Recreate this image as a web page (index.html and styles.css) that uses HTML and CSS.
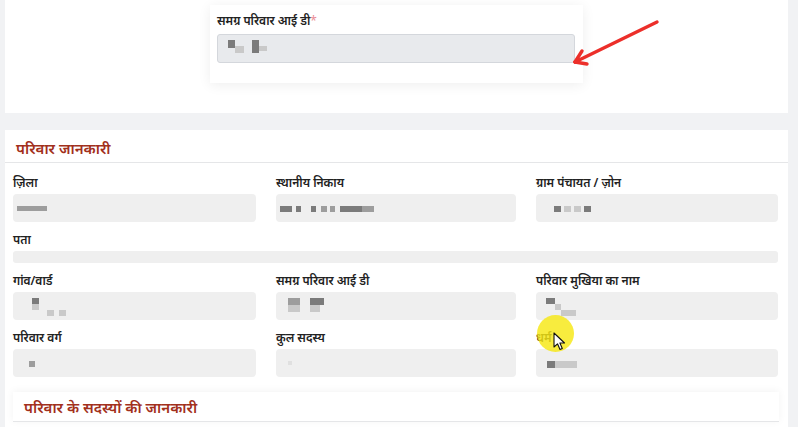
FILE: index.html
```html
<!DOCTYPE html>
<html lang="hi">
<head>
<meta charset="utf-8">
<title>परिवार जानकारी</title>
<link rel="stylesheet" href="styles.css">
</head>
<body>
<div class="page">
  <section class="top-panel">
    <div class="id-card">
      <label class="label">समग्र परिवार आई डी<span class="req">*</span></label>
      <div class="id-input">
        <span class="blk d w7 h8"></span><span class="blk l w9 h7 low"></span>
        <span class="blk d w7 h13 sp8"></span><span class="blk l w8 h5 low"></span>
      </div>
    </div>
  </section>

  <section class="info-panel">
    <h2 class="panel-title">परिवार जानकारी</h2>
    <div class="grid">
      <div class="field">
        <div class="label">ज़िला</div>
        <div class="input"><span class="blk m w30 h5"></span></div>
      </div>
      <div class="field">
        <div class="label">स्थानीय निकाय</div>
        <div class="input">
          <span class="blk d w12 h6"></span><span class="blk d w5 h6 sp4"></span><span class="blk d w5 h6 sp10"></span><span class="blk m w6 h6 sp5"></span><span class="blk m w5 h6 sp3"></span><span class="blk d w22 h6 sp5"></span><span class="blk m w12 h6"></span>
        </div>
      </div>
      <div class="field">
        <div class="label">ग्राम पंचायत / ज़ोन</div>
        <div class="input"><span class="blk d w7 h6 sp14"></span><span class="blk l w7 h6 sp3"></span><span class="blk l w7 h6 sp3"></span><span class="blk d w7 h6 sp3"></span></div>
      </div>

      <div class="field wide">
        <div class="label">पता</div>
        <div class="input thin"></div>
      </div>

      <div class="field">
        <div class="label">गांव/वार्ड</div>
        <div class="input">
          <span class="stack sp15"><span class="blk d w7 h6"></span><span class="blk l w7 h6"></span></span>
          <span class="blk l w7 h6 low sp8"></span><span class="blk l w7 h6 low sp5"></span>
        </div>
      </div>
      <div class="field">
        <div class="label">समग्र परिवार आई डी</div>
        <div class="input">
          <span class="stack sp8"><span class="blk m w12 h7"></span><span class="blk l w12 h7"></span></span>
          <span class="stack sp10"><span class="blk d w14 h7"></span><span class="blk l w10 h7"></span></span>
        </div>
      </div>
      <div class="field">
        <div class="label">परिवार मुखिया का नाम</div>
        <div class="input">
          <span class="stack sp6"><span class="blk d w9 h6"></span></span><span class="blk l w6 h6 hi"></span>
          <span class="blk l w15 h6 low"></span>
        </div>
      </div>

      <div class="field">
        <div class="label">परिवार वर्ग</div>
        <div class="input"><span class="blk m w6 h6 sp12"></span></div>
      </div>
      <div class="field">
        <div class="label">कुल सदस्य</div>
        <div class="input"><span class="blk f w4 h4 sp8"></span></div>
      </div>
      <div class="field">
        <div class="label">धर्म</div>
        <div class="input"><span class="blk d w8 h7 sp7"></span><span class="blk l w22 h7"></span></div>
      </div>
    </div>

    <div class="sub-card">
      <h3 class="sub-title">परिवार के सदस्यों की जानकारी</h3>
    </div>
  </section>
</div>

<svg class="arrow" width="110" height="60" viewBox="0 0 110 60" aria-hidden="true">
  <g fill="none" stroke="#ec2f2a" stroke-width="3.4" stroke-linecap="round" stroke-linejoin="round">
    <path d="M96 6 L14 46"/>
    <path d="M14 46 L21 35"/>
    <path d="M14 46 L26 48"/>
  </g>
</svg>

<div class="highlight"></div>
<svg class="cursor" width="14" height="20" viewBox="0 0 14 20" aria-hidden="true">
  <path d="M1 1 L1 15 L4.5 11.8 L7 17.5 L9.3 16.5 L6.9 11 L11.5 11 Z" fill="#fff" stroke="#111" stroke-width="1.1" stroke-linejoin="round"/>
</svg>
</body>
</html>
```

FILE: styles.css
```css
* { box-sizing: border-box; }

html, body {
  margin: 0;
  padding: 0;
}

body {
  background: #f1f2f4;
  font-family: "Noto Sans", "Lohit Devanagari", "FreeSans", sans-serif;
  color: #222;
  width: 798px;
  height: 427px;
  overflow: hidden;
  position: relative;
}

.page {
  padding: 0 10px 0 5px;
}

.top-panel {
  background: #fff;
  height: 113px;
  display: flex;
  justify-content: center;
  padding-top: 5px;
}

.id-card {
  width: 373px;
  height: 78px;
  background: #fff;
  box-shadow: 0 2px 12px rgba(0, 0, 0, 0.07);
  padding: 8px 8px 0 7px;
}

.label {
  display: block;
  font-size: 12px;
  font-weight: 600;
  line-height: 16px;
  height: 16px;
  color: #222;
  margin-bottom: 3px;
  white-space: nowrap;
}

.req {
  color: #eb8e96;
  font-weight: 400;
}

.id-input {
  height: 29px;
  margin-top: 5px;
  background: #e8eaed;
  border: 1px solid #d4d7dc;
  border-radius: 3px;
  display: flex;
  align-items: flex-start;
  padding: 5px 0 0 10px;
}

.info-panel {
  background: #fff;
  margin-top: 17px;
  height: 297px;
}

.panel-title {
  margin: 0;
  height: 33px;
  line-height: 36px;
  padding-left: 11px;
  font-size: 15px;
  font-weight: 600;
  color: #a2301c;
  border-bottom: 1px solid #e5e6e8;
}

.grid {
  display: grid;
  grid-template-columns: 243px 240px 242px;
  column-gap: 20px;
  row-gap: 10px;
  padding: 12px 9px 0 8px;
}

.field.wide {
  grid-column: 1 / -1;
}

.input {
  height: 28px;
  background: #efefef;
  border-radius: 4px;
  display: flex;
  align-items: flex-start;
  padding: 12px 0 0 4px;
}

.input.thin {
  height: 12px;
  padding: 0;
  border-radius: 3px;
}

.blk {
  display: block;
  flex: none;
}
.blk.d { background: #7b7b7b; }
.blk.m { background: #9d9d9d; }
.blk.l { background: #c9c9c9; }
.blk.f { background: #e0e0e0; }
.blk.low { margin-top: 6px; }
.blk.hi { margin-top: 0; }

.stack {
  display: flex;
  flex-direction: column;
  flex: none;
  margin-top: -6px;
}

.w4 { width: 4px; } .w5 { width: 5px; } .w6 { width: 6px; } .w7 { width: 7px; }
.w8 { width: 8px; } .w9 { width: 9px; } .w10 { width: 10px; } .w12 { width: 12px; }
.w14 { width: 14px; } .w15 { width: 15px; } .w22 { width: 22px; } .w30 { width: 30px; }
.h4 { height: 4px; } .h5 { height: 5px; } .h6 { height: 6px; } .h7 { height: 7px; }
.h8 { height: 8px; } .h13 { height: 13px; }
.sp3 { margin-left: 3px; } .sp4 { margin-left: 4px; } .sp5 { margin-left: 5px; }
.sp6 { margin-left: 6px; } .sp7 { margin-left: 7px; } .sp8 { margin-left: 8px; }
.sp10 { margin-left: 10px; } .sp12 { margin-left: 12px; } .sp14 { margin-left: 14px; }
.sp15 { margin-left: 15px; }

.sub-card {
  margin: 15px 9px 0 8px;
  height: 30px;
  background: #fff;
  box-shadow: 0 -1px 8px rgba(0, 0, 0, 0.05);
  border-bottom: 1px solid #e5e6e8;
}

.sub-title {
  margin: 0;
  line-height: 30px;
  padding-left: 11px;
  font-size: 15px;
  font-weight: 600;
  color: #a2301c;
}

.arrow {
  position: absolute;
  left: 561px;
  top: 16px;
}

.highlight {
  position: absolute;
  left: 537px;
  top: 315px;
  width: 37px;
  height: 37px;
  border-radius: 50%;
  background: rgba(246, 232, 20, 0.82);
}

.cursor {
  position: absolute;
  left: 553px;
  top: 332px;
}
```
